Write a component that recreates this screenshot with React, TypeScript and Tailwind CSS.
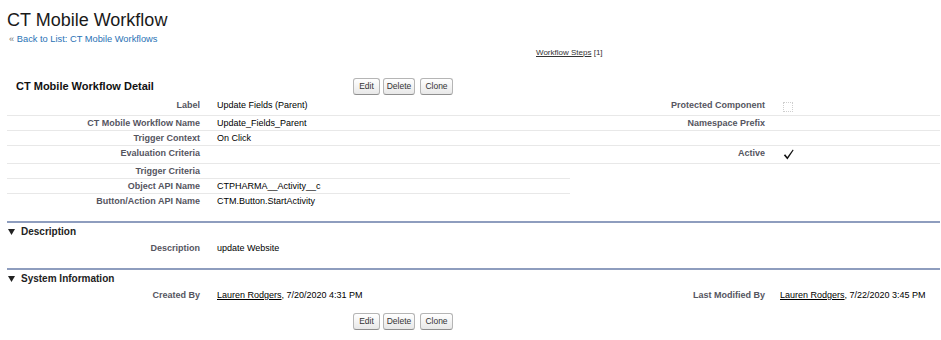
import React from 'react';

const cn = (...c: (string | false | undefined)[]) => c.filter(Boolean).join(' ');

const Btn: React.FC<{ label: string; className: string }> = ({ label, className }) => (
  <button
    className={cn(
      'h-[17px] rounded-[3px] border border-[#b5b5b5] border-b-[#8f8f8f] bg-gradient-to-b from-white to-[#e8e8e8] text-[8.5px] leading-none text-[#333]',
      className,
    )}
  >
    {label}
  </button>
);

const Buttons = () => (
  <div className="flex">
    <Btn label="Edit" className="w-[27px]" />
    <Btn label="Delete" className="ml-[3px] w-[32px]" />
    <Btn label="Clone" className="ml-[5px] w-[33px]" />
  </div>
);

const Unchecked = () => (
  <span className="ml-[3px] mt-[2px] block h-[10px] w-[10px] border border-dotted border-[#cfcfcf]" />
);

const Checked = () => (
  <svg width="11" height="11" viewBox="0 0 11 11" className="ml-[3px] mt-[1px] block">
    <path d="M0.8 6.2 L2.2 5.2 L4.3 7.9 L9.8 0.6 L10.6 1.3 L4.4 10.6 Z" fill="#111" />
  </svg>
);

type RowProps = {
  h: string;
  label: string;
  value?: React.ReactNode;
  rLabel?: string;
  rValue?: React.ReactNode;
  lineLeft?: boolean;
  lineRight?: boolean;
};

const labelCls = 'pr-[10px] text-right text-[9px] font-bold leading-[10px] text-[#55555f]';
const valueCls = 'flex-1 text-[9px] leading-[10px] text-black';

const Row: React.FC<RowProps> = ({ h, label, value, rLabel, rValue, lineLeft, lineRight }) => (
  <div className={cn('flex', h)}>
    <div className={cn('flex w-[563px] pt-[2px]', lineLeft && 'border-b border-[#e8e8e8]')}>
      <div className={cn('w-[203px]', labelCls)}>{label}</div>
      <div className={cn('pl-[7px]', valueCls)}>{value}</div>
    </div>
    <div className={cn('flex flex-1 pt-[2px]', lineRight && 'border-b border-[#e8e8e8]')}>
      <div className={cn('w-[205px]', labelCls)}>{rLabel}</div>
      <div className={cn('pl-[5px]', valueCls)}>{rValue}</div>
    </div>
  </div>
);

const Triangle = () => (
  <svg width="7" height="6" viewBox="0 0 7 6" className="mr-[6px]">
    <polygon points="0,0 7,0 3.5,6" fill="#222" />
  </svg>
);

const SectionHead: React.FC<{ title: string }> = ({ title }) => (
  <div className="border-t-2 border-[#8e9dbe]">
    <div className="flex h-[18px] items-center pl-[1px]">
      <Triangle />
      <span className="text-[10px] font-bold leading-[12px] text-[#222]">{title}</span>
    </div>
  </div>
);

const Person: React.FC<{ date: string }> = ({ date }) => (
  <>
    <span className="underline">Lauren Rodgers</span>, {date}
  </>
);

export default function App() {
  return (
    <div className="h-[340px] w-[941px] overflow-hidden bg-white font-['Liberation_Sans',Arial,sans-serif] pl-[7px] pr-[1px]">
      <h1 className="pt-[10px] text-[18px] font-normal leading-[21px] text-[#1a1a1a]">CT Mobile Workflow</h1>
      <div className="mt-[2px] pl-[2px] text-[9.3px] leading-[12px] text-[#2a72b5]">
        <span className="text-[#777]">«</span> Back to List: CT Mobile Workflows
      </div>
      <div className="mt-[3px] pl-[529px] text-[8px] leading-[10px] text-[#333]">
        <span className="underline">Workflow Steps</span> [1]
      </div>

      <div className="mt-[16px] flex h-[24px] items-center">
        <div className="w-[346px] pl-[9px] text-[11px] font-bold leading-[13px] text-[#111]">CT Mobile Workflow Detail</div>
        <Buttons />
      </div>

      <Row h="h-[18px]" label="Label" value="Update Fields (Parent)" rLabel="Protected Component" rValue={<Unchecked />} lineLeft lineRight />
      <Row h="h-[15px]" label="CT Mobile Workflow Name" value="Update_Fields_Parent" rLabel="Namespace Prefix" lineLeft lineRight />
      <Row h="h-[15px]" label="Trigger Context" value="On Click" lineLeft lineRight />
      <Row h="h-[18px]" label="Evaluation Criteria" rLabel="Active" rValue={<Checked />} lineLeft lineRight />
      <Row h="h-[15px]" label="Trigger Criteria" lineLeft />
      <Row h="h-[15px]" label="Object API Name" value="CTPHARMA__Activity__c" lineLeft />
      <Row h="h-[15px]" label="Button/Action API Name" value="CTM.Button.StartActivity" />

      <div className="mt-[12px]">
        <SectionHead title="Description" />
        <Row h="h-[15px]" label="Description" value="update Website" />
      </div>

      <div className="mt-[12px]">
        <SectionHead title="System Information" />
        <Row
          h="h-[15px]"
          label="Created By"
          value={<Person date="7/20/2020 4:31 PM" />}
          rLabel="Last Modified By"
          rValue={<Person date="7/22/2020 3:45 PM" />}
        />
      </div>

      <div className="mt-[10px] pl-[346px]">
        <Buttons />
      </div>
    </div>
  );
}
